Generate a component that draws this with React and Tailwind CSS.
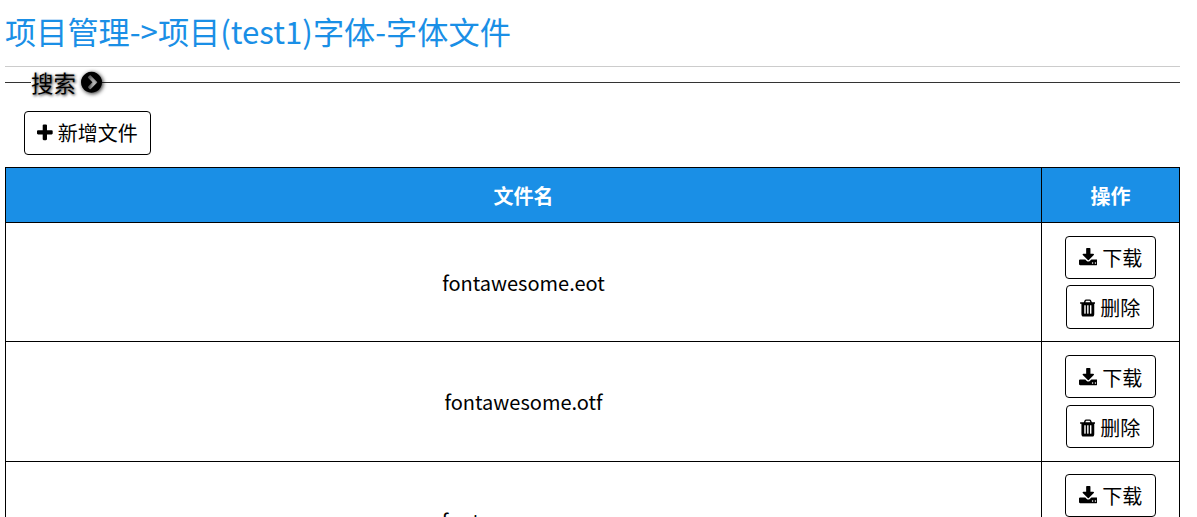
const files = [
  { name: 'fontawesome.eot', row: 'h-[119px]', nameCell: 'pt-[2px]', stack: 'gap-[6px]', del: 'h-[44px]' },
  { name: 'fontawesome.otf', row: 'h-[120px]', nameCell: 'pt-0', stack: 'gap-[7px]', del: 'h-[43px]' },
  { name: 'fontawesome.svg', row: 'h-[117px]', nameCell: 'pt-[2px]', stack: 'gap-[6px]', del: 'h-[44px]' },
]

// font-awesome 4 glyphs, cropped to their advance width
const PLUS = 'M1600 736v192q0 40-28 68t-68 28h-416v416q0 40-28 68t-68 28h-192q-40 0-68-28t-28-68v-416h-416q-40 0-68-28t-28-68v-192q0-40 28-68t68-28h416v-416q0-40 28-68t68-28h192q40 0 68 28t28 68v416h416q40 0 68 28t28 68z'
const DOWNLOAD = 'M1344 1344q0-26-19-45t-45-19-45 19-19 45 19 45 45 19 45-19 19-45zm256 0q0-26-19-45t-45-19-45 19-19 45 19 45 45 19 45-19 19-45zm128-224v320q0 40-28 68t-68 28h-1472q-40 0-68-28t-28-68v-320q0-40 28-68t68-28h465l135 136q58 56 136 56t136-56l136-136h464q40 0 68 28t28 68zm-325-569q17 41-14 70l-448 448q-18 19-45 19t-45-19l-448-448q-31-29-14-70 17-39 59-39h256v-448q0-26 19-45t45-19h256q26 0 45 19t19 45v448h256q42 0 59 39z'
const TRASH = 'M704 1376v-704q0-14-9-23t-23-9h-64q-14 0-23 9t-9 23v704q0 14 9 23t23 9h64q14 0 23-9t9-23zm256 0v-704q0-14-9-23t-23-9h-64q-14 0-23 9t-9 23v704q0 14 9 23t23 9h64q14 0 23-9t9-23zm256 0v-704q0-14-9-23t-23-9h-64q-14 0-23 9t-9 23v704q0 14 9 23t23 9h64q14 0 23-9t9-23zm-544-992h448l-48-117q-7-9-17-11h-317q-10 2-17 11zm928 32v64q0 14-9 23t-23 9h-96v948q0 83-47 143.500t-113 60.500h-832q-66 0-113-58.500t-47-141.500v-952h-96q-14 0-23-9t-9-23v-64q0-14 9-23t23-9h309l70-167q15-37 54-63t79-26h320q40 0 79 26t54 63l70 167h309q14 0 23 9t9 23z'
const CHEVRON = 'M845 1395l454-454q19-19 19-45t-19-45l-454-454q-19-19-45-19t-45 19l-102 102q-19 19-19 45t19 45l307 307-307 307q-19 19-19 45t19 45l102 102q19 19 45 19t45-19zm819-499q0 209-103 385.500t-279.500 279.500-385.500 103-385.500-103-279.500-279.500-103-385.500 103-385.500 279.500-279.500 385.500-103 385.500 103 279.500 279.500 103 385.500z'

function Glyph({ d, viewBox, className }) {
  return (
    <svg viewBox={viewBox} fill="currentColor" className={className}>
      <path d={d} />
    </svg>
  )
}

export default function App() {
  return (
    <div className="h-[517px] overflow-hidden bg-white text-black pl-[5px] pr-[17px] font-['Noto_Sans_CJK_SC','Noto_Sans',sans-serif]">
      <h1 className="pt-[9px] h-[67px] border-b border-[#cccccc] text-[31.2px] leading-[44px] font-normal text-[#1a8fe6]">
        项目管理-&gt;项目(test1)字体-字体文件
      </h1>

      <div className="relative mt-[15px] h-[85px] border-t border-[#333333]">
        <div className="absolute left-[26px] top-[-16px] flex items-center gap-[5px] bg-white text-[22.4px] leading-[30px] [text-shadow:1px_1px_3px_rgba(0,0,0,0.9)]">
          搜索
          <Glyph
            d={CHEVRON}
            viewBox="128 0 1536 1792"
            className="w-[21px] h-[24.5px] [filter:drop-shadow(1px_1px_2px_rgba(0,0,0,0.9))]"
          />
        </div>
        <button className="absolute left-[19px] top-[28px] flex items-center justify-center w-[127px] h-[44px] border border-black rounded bg-white text-[20px] leading-none">
          <Glyph d={PLUS} viewBox="192 0 1408 1792" className="w-[15.7px] h-[20px] mr-[5px]" />
          新增文件
        </button>
      </div>

      <table className="w-[1175px] table-fixed border-collapse border border-black">
        <thead>
          <tr className="h-[55px] bg-[#1a8fe6] text-white text-[20px]">
            <th className="border border-black font-bold pt-[2px]">文件名</th>
            <th className="w-[138px] border border-black font-bold pt-[2px]">操作</th>
          </tr>
        </thead>
        <tbody>
          {files.map((f) => (
            <tr key={f.name} className={f.row}>
              <td className={`border border-black text-center text-[20px] ${f.nameCell}`}>{f.name}</td>
              <td className="border border-black">
                <div className={`flex flex-col items-center ${f.stack}`}>
                  <button className="flex items-center justify-center w-[91px] h-[43px] pt-[2px] border border-black rounded bg-white text-[20px] leading-none">
                    <Glyph d={DOWNLOAD} viewBox="64 0 1664 1792" className="w-[18.6px] h-[20px] mr-[5px]" />
                    下载
                  </button>
                  <button className={`flex items-center justify-center w-[88px] pt-[2px] mr-[1px] border border-black rounded bg-white text-[20px] leading-none ${f.del}`}>
                    <Glyph d={TRASH} viewBox="192 0 1408 1792" className="w-[15.7px] h-[20px] mr-[5px]" />
                    删除
                  </button>
                </div>
              </td>
            </tr>
          ))}
        </tbody>
      </table>
    </div>
  )
}
